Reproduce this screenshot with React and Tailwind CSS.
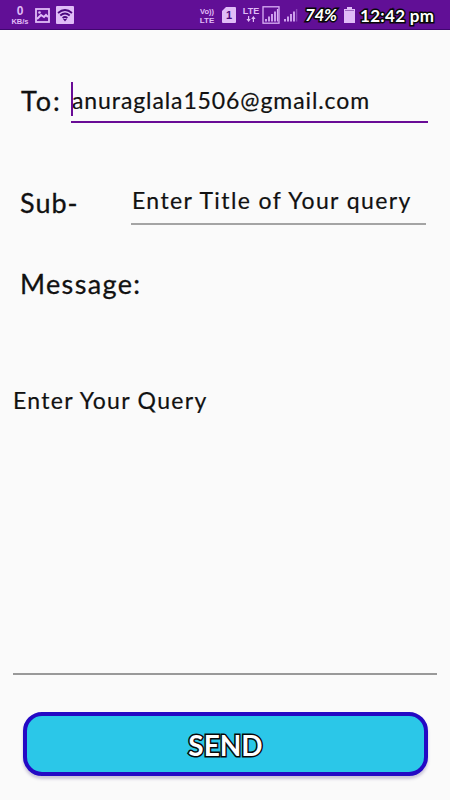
import React from "react";

const outline =
  "[paint-order:stroke_fill] [-webkit-text-stroke:3px_#080808] text-white";

function SignalBars({ boxed }) {
  return (
    <svg viewBox="0 0 18 18" className="h-[18px] w-[18px] shrink-0" fill="none">
      {boxed && <rect x="1" y="0.8" width="16" height="16.4" stroke="#d9aff5" strokeWidth="1.3" />}
      <path d="M4 15.5v-2.5M7 15.5v-5M10 15.5V8M13 15.5V5.5" stroke="#d9aff5" strokeWidth="1.8" />
      <path d="M15.6 15.5V3" stroke={boxed ? "#d9aff5" : "#8a48b8"} strokeWidth="1.4" />
    </svg>
  );
}

function StatusBar() {
  return (
    <header className="flex h-[30px] shrink-0 items-start border-b border-[#40076f] bg-[#610f96] font-['Liberation_Sans',sans-serif] font-bold text-[#e0bcf7]">
      <div className="ml-[10px] mt-[5px] w-[20px] text-center">
        <div className="text-[12px] leading-[12px]">0</div>
        <div className="mt-px text-[7.5px] leading-[8px]">KB/s</div>
      </div>
      <svg viewBox="0 0 15 15" className="ml-[5px] mt-[8px] h-[15px] w-[15px]" fill="none">
        <rect x="1" y="1" width="13" height="13" stroke="#e0bcf7" strokeWidth="1.8" />
        <path d="M2 11l4-4 3 2 2-2 2 2" stroke="#e0bcf7" strokeWidth="2" />
        <circle cx="4.5" cy="4.5" r="1.3" fill="#e0bcf7" />
      </svg>
      <svg viewBox="0 0 18 18" className="ml-[6px] mt-[6px] h-[18px] w-[18px]" fill="none">
        <rect width="18" height="18" rx="1" fill="#e0bcf7" />
        <path d="M2 7q7-6 14 0M4.3 9.5q4.7-4 9.4 0M6.6 12q2.4-2 4.8 0" stroke="#4b087e" strokeWidth="1.8" />
        <path d="M7 13h4l-2 2.5z" fill="#4b087e" />
      </svg>
      <div className="ml-[124px] mt-[8px] w-[18px] text-center text-[8px]">
        <div className="h-[8px] text-[7.5px] leading-[8px]">Vo))</div>
        <div className="h-[8px] leading-[9px]">LTE</div>
      </div>
      <svg viewBox="0 0 14 16" className="ml-[6px] mt-[7px] h-[16px] w-[14px]">
        <path d="M4 0h9q1 0 1 1v14q0 1-1 1H1q-1 0-1-1V4z" fill="#e0bcf7" />
        <text x="7" y="12" textAnchor="middle" fontSize="11" fontWeight="bold" fill="#4b087e">1</text>
      </svg>
      <div className="ml-[6px] mt-[7px] w-[18px] text-center">
        <div className="text-[9px] leading-[8px]">LTE</div>
        <svg viewBox="0 0 10 6" className="mx-auto mt-px h-[6px] w-[10px]" fill="#e0bcf7">
          <path d="M2 0h1.2v3h1.6L2.6 6 .4 3H2zM6.8 6H8V3h1.6L7.4 0 5.2 3h1.6z" />
        </svg>
      </div>
      <div className="ml-[2px] mt-[6px] flex gap-px">
        <SignalBars boxed />
        <SignalBars />
      </div>
      <span className={`ml-[6px] mt-[5px] w-[34px] whitespace-nowrap font-['Lato',sans-serif] text-[17px] leading-[20px] tracking-[-0.4px] italic ${outline}`}>74%</span>
      <svg viewBox="0 0 11 16" className="ml-[5px] mt-[7px] h-[16px] w-[11px]" fill="#e0bcf7">
        <path d="M3 0h5v2h3v14H0V2h3z" />
        <path d="M1 3.5h9" stroke="#9d6abf" />
      </svg>
      <span className={`ml-[5px] mt-[6px] whitespace-nowrap font-['Lato',sans-serif] text-[17px] leading-[20px] tracking-[0.3px] ${outline}`}>12:42 pm</span>
    </header>
  );
}

const label =
  "whitespace-nowrap text-[27px] leading-[32px] [-webkit-text-stroke:0.3px_#111]";
const field =
  "whitespace-nowrap text-[23px] leading-[28px] [-webkit-text-stroke:0.2px_#111]";

export default function App() {
  return (
    <div className="flex h-[800px] w-[450px] flex-col overflow-hidden bg-[#fafafa] font-['Lato',sans-serif] text-[#111]">
      <StatusBar />
      <div className="flex h-[93px] shrink-0 pl-[21px] pt-[52px]">
        <span className={`${label} mt-[3px] w-[50px] tracking-[2px]`}>To:</span>
        <div className="relative h-[41px] w-[357px] border-b-2 border-[#690c96]">
          <span className="absolute left-0 top-0 h-[34px] w-[2px] bg-[#690c96]" />
          <span className={`${field} mt-[4px] block pl-px tracking-[0.9px]`}>anuraglala1506@gmail.com</span>
        </div>
      </div>
      <div className="flex h-[102px] shrink-0 pl-[20px] pt-[63px]">
        <span className={`${label} mt-px w-[111px] tracking-[1px]`}>Sub-</span>
        <div className="h-[39px] w-[295px] border-b-2 border-[#a4a4a4]">
          <span className={`${field} block pl-px tracking-[1.4px]`}>Enter Title of Your query</span>
        </div>
      </div>
      <div className={`${label} ml-[20px] mt-[43px] shrink-0 tracking-[1.35px]`}>Message:</div>
      <div className="mx-[13px] mt-[86px] h-[289px] shrink-0 border-b-2 border-[#999]">
        <span className={`${field} block tracking-[1.3px]`}>Enter Your Query</span>
      </div>
      <button className="ml-[23px] mt-[37px] flex h-[64px] w-[405px] shrink-0 items-center justify-center rounded-[19px] border-4 border-[#2409c4] bg-[#2bc7e8] shadow-[0_3px_3px_rgba(60,40,120,0.25)]">
        <span className={`mt-[2px] text-[28px] font-bold leading-[34px] ${outline}`}>SEND</span>
      </button>
    </div>
  );
}
